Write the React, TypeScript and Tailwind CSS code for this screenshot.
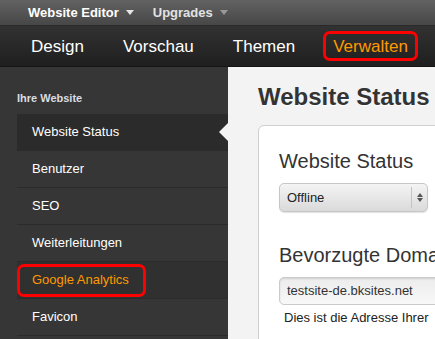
import React from 'react';

const font = { fontFamily: '"Liberation Sans", Arial, Helvetica, sans-serif' };

const navItems = ['Design', 'Vorschau', 'Themen'];

const sideItems = ['Website Status', 'Benutzer', 'SEO', 'Weiterleitungen', 'Google Analytics', 'Favicon'];

function Caret({ className }: { className: string }) {
  return (
    <svg width="8" height="5" viewBox="0 0 8 5" className={className}>
      <path d="M0 0 L8 0 L4 5 Z" fill="currentColor" />
    </svg>
  );
}

export default function App() {
  return (
    <div className="w-[435px] h-[339px] overflow-hidden flex flex-col bg-[#f3f3f3]" style={font}>
      {/* top bar */}
      <div className="h-[26px] shrink-0 flex items-center pl-[28px] gap-[19px] bg-gradient-to-b from-[#626262] to-[#474747] border-b border-[#2a2a2a]">
        <div className="flex items-center gap-[7px] text-[13px] font-bold text-white">
          Website Editor <Caret className="text-[#e6e6e6]" />
        </div>
        <div className="flex items-center gap-[7px] text-[13px] font-bold text-[#e2e2e2]">
          Upgrades <Caret className="text-[#9a9a9a]" />
        </div>
      </div>

      {/* nav bar */}
      <div className="h-[41px] shrink-0 flex items-center pl-[31px] gap-[39px] bg-gradient-to-b from-[#323232] to-[#1f1f1f] border-b border-[#141414]">
        {navItems.map((n) => (
          <span key={n} className="text-[17px] text-white leading-none">{n}</span>
        ))}
        <span className="-ml-[11px] h-[30px] flex items-center px-[7px] border-[3px] border-[#ff0000] rounded-[7px] text-[17px] text-[#ff9900] leading-none">
          Verwalten
        </span>
      </div>

      <div className="flex flex-1 min-h-0">
        {/* sidebar */}
        <aside className="w-[228px] shrink-0 bg-[#363636] pt-[25px] pl-[17px]">
          <div className="text-[11px] font-bold leading-[12px] text-[#d9dde3]">Ihre Website</div>
          <ul className="mt-[10px]">
            {sideItems.map((s, i) => (
              <li
                key={s}
                className={
                  'relative h-[37px] flex items-center pl-[15px] border-b border-[#2b2b2b] text-[13px] ' +
                  (i === 0 ? 'bg-[#2b2b2b] text-white' : i === 4 ? 'bg-[#303030]' : 'text-white')
                }
              >
                {i === 4 ? (
                  <span className="-ml-[15px] h-[33px] flex items-center pl-[12px] pr-[14px] border-[3px] border-[#ff0000] rounded-[7px] text-[#ff9900]">
                    {s}
                  </span>
                ) : (
                  s
                )}
                {i === 0 && (
                  <span className="absolute right-0 top-[9px] w-0 h-0 border-y-[9px] border-y-transparent border-r-[9px] border-r-[#f3f3f3]" />
                )}
              </li>
            ))}
          </ul>
        </aside>

        {/* content */}
        <main className="flex-1 min-w-0 overflow-hidden pt-[16px] pl-[30px]">
          <h1 className="text-[24px] font-bold leading-[28px] text-[#333] [text-shadow:0_1px_0_#fff]">Website Status</h1>
          <div className="mt-[14px] w-[320px] h-[300px] bg-white border border-[#cfcfcf] rounded-[6px] pt-[23px] pl-[20px]">
            <h2 className="text-[20px] leading-[24px] text-[#333]">Website Status</h2>
            <div className="mt-[10px] w-[149px] h-[29px] flex items-center rounded-[5px] border border-[#c6c6c6] bg-gradient-to-b from-[#f4f4f4] to-[#dadada] shadow-[0_1px_1px_rgba(0,0,0,0.12)]">
              <span className="flex-1 pl-[7px] text-[13px] text-[#222]">Offline</span>
              <div className="w-[16px] h-[21px] border-l border-[#c4c4c4] flex flex-col items-center justify-center gap-[1px]">
                <svg width="6" height="4" viewBox="0 0 6 4"><path d="M0 4 L6 4 L3 0 Z" fill="#555" /></svg>
                <svg width="6" height="4" viewBox="0 0 6 4"><path d="M0 0 L6 0 L3 4 Z" fill="#555" /></svg>
              </div>
            </div>
            <h2 className="mt-[31px] text-[20px] leading-[24px] text-[#333] whitespace-nowrap">Bevorzugte Doma</h2>
            <div className="mt-[10px] w-[260px] h-[28px] flex items-center rounded-[5px] border border-[#cacaca] bg-gradient-to-b from-[#ececec] to-[#f8f8f8] shadow-[inset_0_1px_2px_rgba(0,0,0,0.12)] pl-[7px] text-[13px] text-[#333]">
              testsite-de.bksites.net
            </div>
            <p className="mt-[5px] pl-[5px] text-[13px] leading-[16px] text-[#222] whitespace-nowrap">Dies ist die Adresse Ihrer</p>
          </div>
        </main>
      </div>
    </div>
  );
}
